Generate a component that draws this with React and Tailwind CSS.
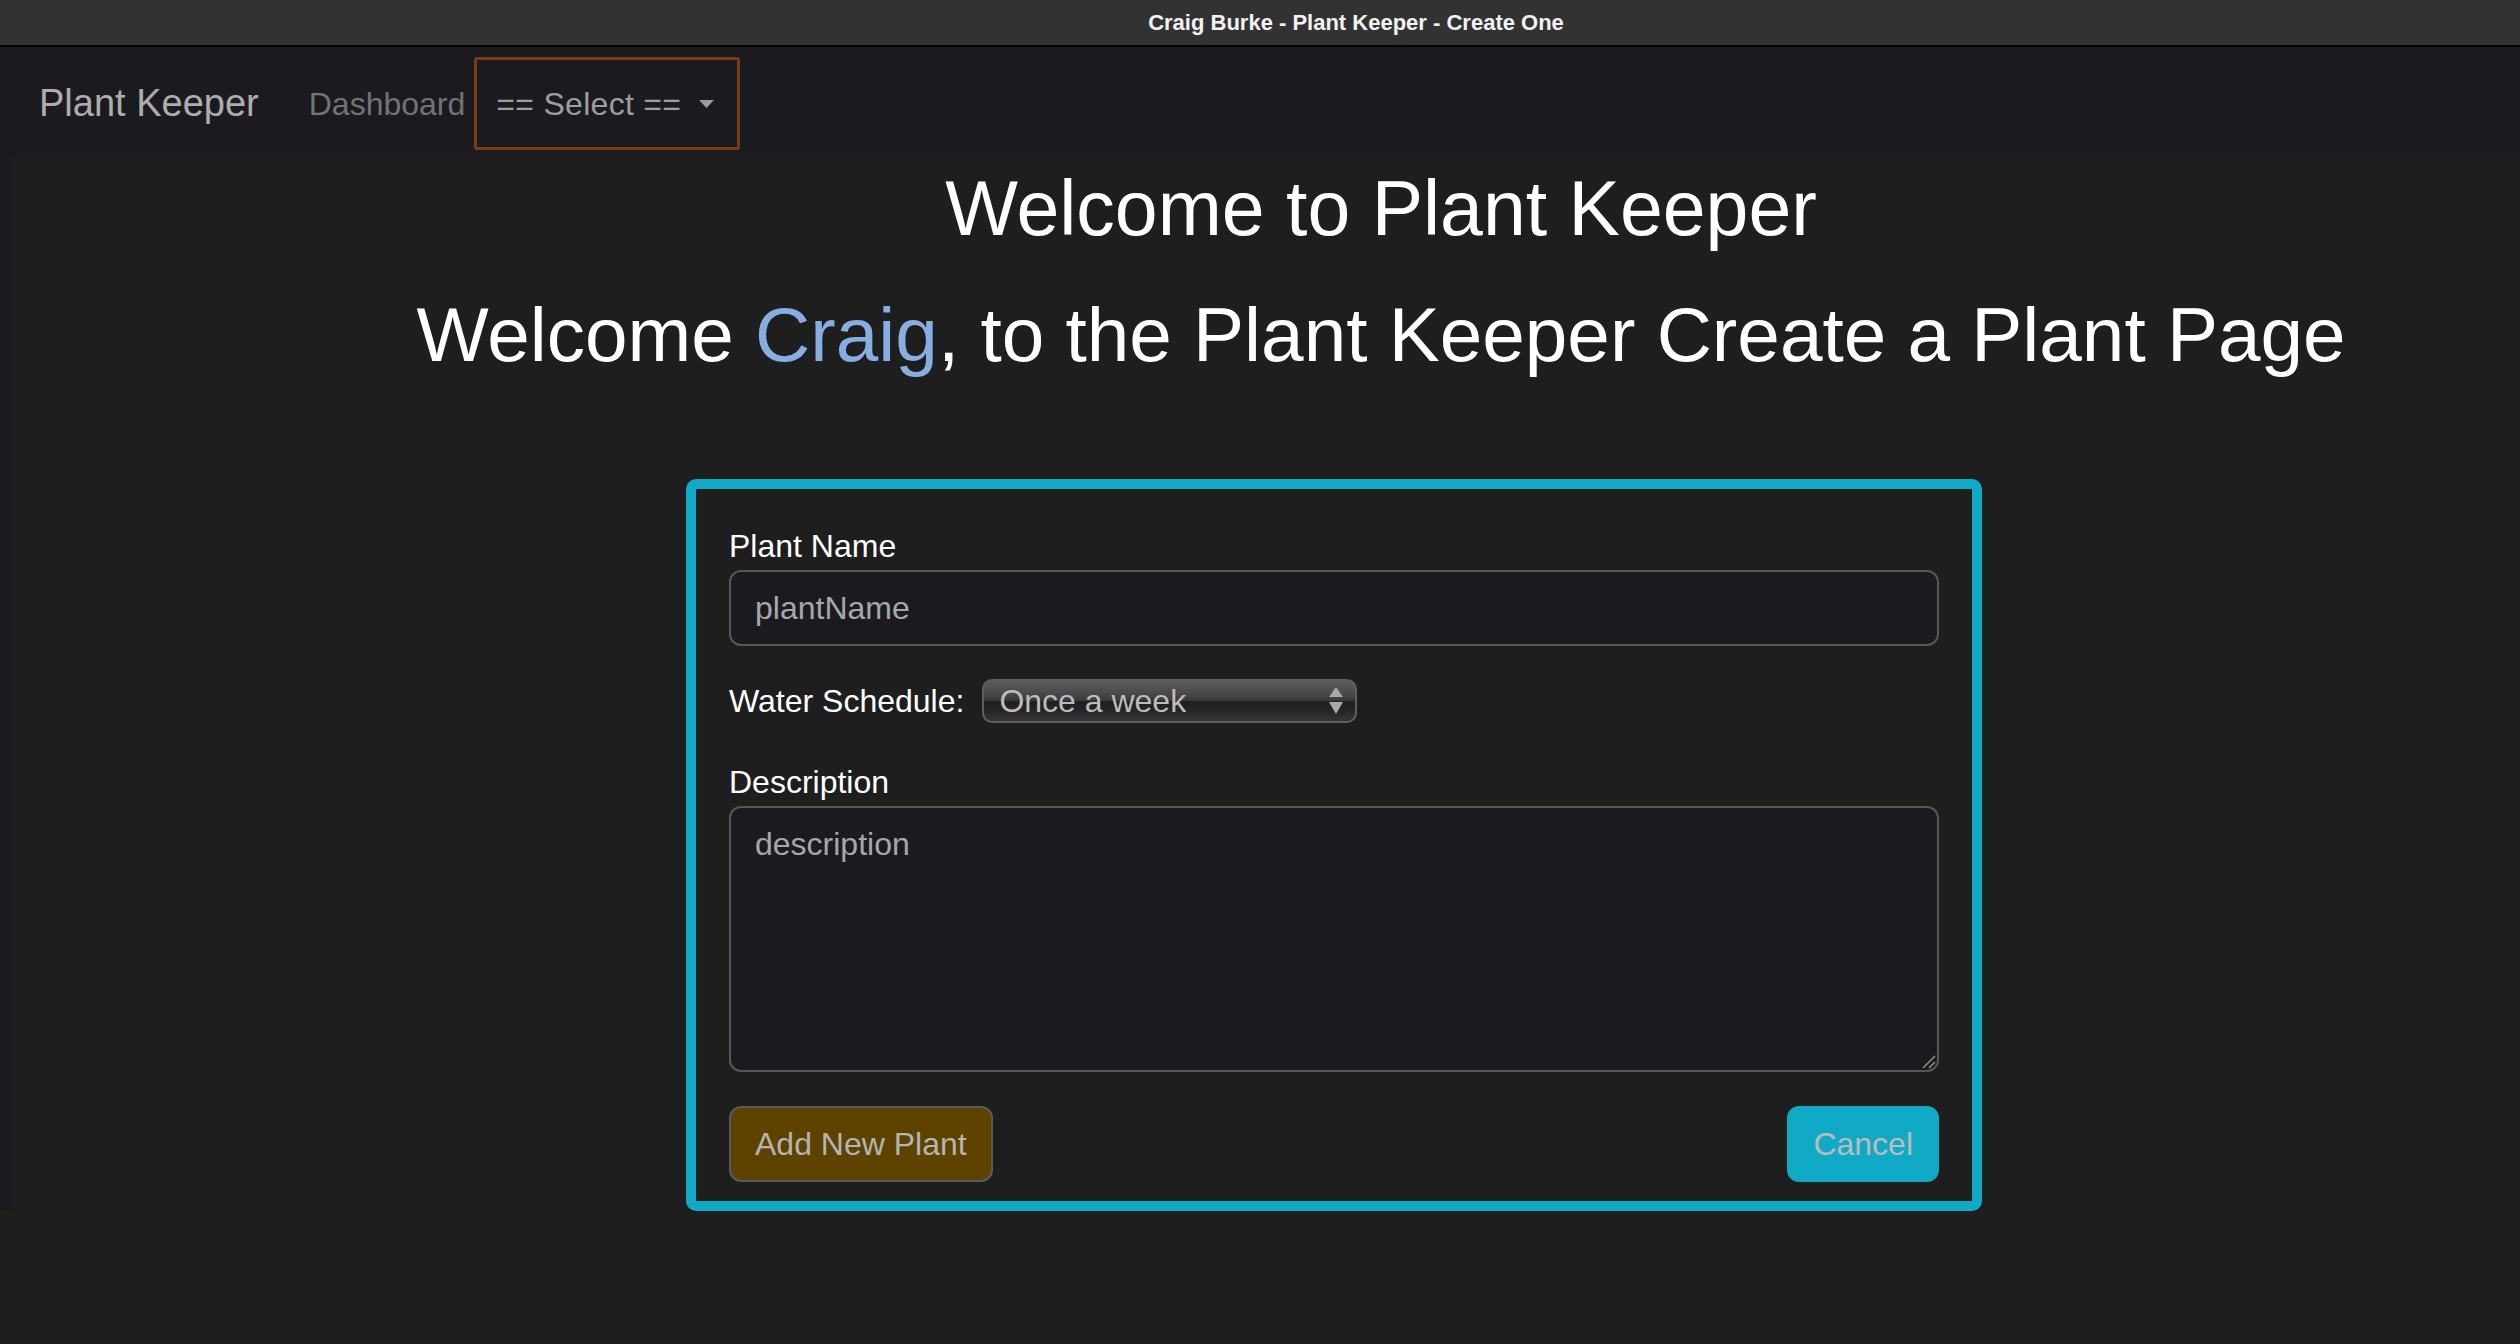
import React from 'react';

// Plant Keeper — "Create a Plant" page, dark theme

const Caret = () => (
  <svg width="15" height="8" viewBox="0 0 15 8" className="ml-[18px]">
    <path d="M0 0 L15 0 L7.5 8 Z" fill="#9a9a9a" />
  </svg>
);

const Stepper = () => (
  <svg width="16" height="28" viewBox="0 0 16 28" className="shrink-0">
    <path d="M8 0 L15 10 L1 10 Z" fill="#a9a9a9" />
    <path d="M1 15 L15 15 L8 27 Z" fill="#a9a9a9" />
  </svg>
);

const ResizeGrip = () => (
  <svg width="16" height="16" viewBox="0 0 16 16" className="absolute right-[3px] bottom-[3px]">
    <path d="M3 15 L15 3" stroke="#8d8d8d" strokeWidth="1.6" />
    <path d="M9 15 L15 9" stroke="#8d8d8d" strokeWidth="1.6" />
  </svg>
);

function TitleBar() {
  return (
    <div className="h-[47px] bg-[#323232] border-b-2 border-black flex items-center justify-center pl-[192px]">
      <span className="text-[22px] font-bold text-[#f2f2f2]">
        Craig Burke - Plant Keeper - Create One
      </span>
    </div>
  );
}

function NavBar() {
  return (
    <nav className="h-[111px] flex items-center pl-[39px] pt-[2px]">
      <span className="text-[38px] leading-[57px] text-[#adadad]">Plant Keeper</span>
      <span className="ml-[50px] text-[32px] leading-[48px] text-[#737373]">Dashboard</span>
      <div className="ml-[9px] w-[266px] h-[93px] border-[3px] border-[#7a3b16] rounded-[3px] flex items-center pl-[19px]">
        <span className="text-[32px] leading-[48px] text-[#9d9d9d] tracking-[0.3px]">== Select ==</span>
        <Caret />
      </div>
    </nav>
  );
}

function PlantForm() {
  return (
    <div className="mt-[98px] ml-[673px] w-[1296px] border-[10px] border-[#10aac6] rounded-[10px] bg-[#1e1e1e] pt-[33px] px-[33px] pb-[19px]">
      <label className="block text-[32px] leading-[48px] text-white">Plant Name</label>
      <input
        placeholder="plantName"
        className="block w-full h-[76px] px-[24px] bg-[#1b1b1f] border-2 border-[#575757] rounded-[12px] text-[32px] text-[#d0d0d0] placeholder:text-[#a5a8ab] outline-none"
      />

      <div className="mt-[31px] h-[48px] flex items-center">
        <span className="text-[32px] leading-[48px] text-white">Water Schedule:</span>
        <div
          className="ml-[18px] w-[375px] h-[44px] rounded-[10px] border-2 border-[#5f5f5f] flex items-center pl-[15px] pr-[11px]"
          style={{
            background:
              'linear-gradient(to bottom, #5c5c5c 0%, #4a4a4a 30%, #3a3a3a 48%, #1f1f1f 52%, #262626 75%, #363636 100%)',
          }}
        >
          <span className="flex-1 text-[32px] leading-[40px] text-[#bcbcbc]">Once a week</span>
          <Stepper />
        </div>
      </div>

      <label className="block mt-[33px] text-[32px] leading-[48px] text-white">Description</label>
      <div className="relative">
        <textarea
          placeholder="description"
          className="block w-full h-[266px] px-[24px] py-[12px] bg-[#1b1b1f] border-2 border-[#575757] rounded-[12px] text-[32px] leading-[48px] text-[#d0d0d0] placeholder:text-[#a5a8ab] outline-none resize-none"
        />
        <ResizeGrip />
      </div>

      <div className="mt-[34px] flex justify-between">
        <button className="h-[76px] px-[24px] bg-[#5e4200] border-2 border-[#5a5a5a] rounded-[12px] text-[32px] text-[#b4b4b4]">
          Add New Plant
        </button>
        <button className="h-[76px] px-[24px] bg-[#11aac6] border-2 border-[#11aac6] rounded-[12px] text-[32px] text-[#bcbcbc]">
          Cancel
        </button>
      </div>
    </div>
  );
}

export default function App() {
  return (
    <div className="min-h-screen bg-[#1e1e1e] font-['Liberation_Sans',Arial,sans-serif]">
      <TitleBar />
      <div className="bg-[#1b1b1f]">
        <NavBar />
        <main className="ml-[13px] bg-[#1e1e1e]">
          <h1 className="pt-[4px] pl-[229px] text-center text-[77px] leading-[92px] text-white">
            Welcome to Plant Keeper
          </h1>
          <h2 className="mt-[35px] pl-[229px] text-center text-[76.5px] leading-[92px] text-white">
            Welcome <span className="text-[#88ade0]">Craig</span>, to the Plant Keeper Create a Plant Page
          </h2>
          <PlantForm />
        </main>
      </div>
    </div>
  );
}
